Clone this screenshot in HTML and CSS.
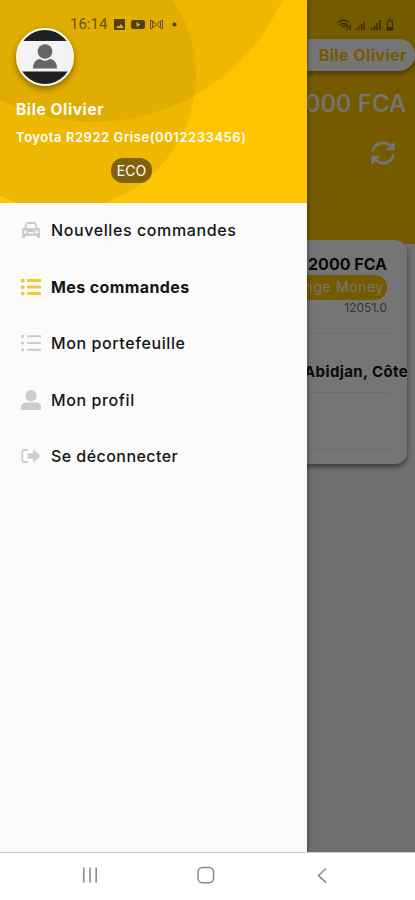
FILE: index.html
```html
<!DOCTYPE html>
<html lang="fr">
<head>
<meta charset="utf-8">
<meta name="viewport" content="width=device-width">
<title>Mes commandes</title>
<link rel="stylesheet" href="styles.css">
</head>
<body>
<div class="phone">
  <main class="screen">
    <section class="hero">
      <div class="user-pill"><span class="pill-name">Bile Olivier</span></div>
      <div class="balance">2000 FCA</div>
      <svg class="refresh" viewBox="0 0 26 26" fill="none" stroke="#fff" stroke-width="2.7"><path d="M2.5 11.5C3.5 6 8 2.800 13 2.800c4 0 6.500 2 8.500 5M23.500 14.500C22.500 20 18 23.200 13 23.200c-4 0-6.500-2-8.500-5"/><path d="M24.500 1.500v8.500h-8.500zM1.500 24.500V16H10z" fill="#fff" stroke-width=".5"/></svg>
    </section>
    <section class="order">
      <div class="price">2000 FCA</div>
      <div class="method">Orange Money</div>
      <div class="ref">12051.0</div>
      <div class="line l1"></div>
      <div class="address">Abidjan, Côte</div>
      <div class="line l2"></div>
      <div class="line l3"></div>
    </section>
  </main>
  <div class="scrim"></div>
  <aside class="drawer">
    <header class="profile">
      <svg class="rings" viewBox="0 0 307 203"><circle cx="93" cy="-86" r="208"/><circle cx="61" cy="75" r="135"/></svg>
      <div class="avatar"><svg viewBox="0 0 54 54"><path d="M0 0h54v11H0zM0 41.500h54V54H0z" fill="#202124"/><circle cx="27" cy="21.500" r="7.300" fill="#666"/><path d="M15 38.500c0-6 3-9 7-9.500q5 3.500 10 0c4 .5 7 3.500 7 9.500z" fill="#666"/></svg></div>
      <div class="name">Bile Olivier</div>
      <div class="vehicle">Toyota R2922 Grise(0012233456)</div>
      <span class="tier">ECO</span>
    </header>
    <nav class="menu">
      <a class="item i1"><svg viewBox="0 0 20 20"><path d="M3 8 5 3.200Q5.500 2 7 2h6q1.500 0 2 1.200L17 8h2v1.500h-.7c.5.700.7 1.500.7 2.500V18h-3v-2H4v2H1v-6c0-1 .2-1.800.7-2.500H1V8zm2.200 0h9.600L13.500 4h-7zM4.500 10.500a1.500 1.500 0 1 0 0 3 1.500 1.500 0 0 0 0-3zm11 0a1.500 1.500 0 1 0 0 3 1.500 1.500 0 0 0 0-3zM7.500 12v1.500h5V12z" fill-rule="evenodd"/></svg><span>Nouvelles commandes</span></a>
      <a class="item i2 active"><svg viewBox="0 0 20 20"><path d="M0 2h3.500v3.200H0zM6 2h14v3H6zM0 8.500h3.500v3.200H0zM6 8.500h14v3H6zM0 15h3.500v3.200H0zM6 15h14v3H6z"/></svg><span>Mes commandes</span></a>
      <a class="item i3"><svg viewBox="0 0 20 20"><path d="M0 2h3v2.500H0zM6 2.200h14v2H6zM0 8.700h3v2.500H0zM6 9h14v2H6zM0 15.500h3V18H0zM6 15.800h14v2H6z"/></svg><span>Mon portefeuille</span></a>
      <a class="item i4"><svg viewBox="0 0 20 20"><circle cx="10" cy="5.700" r="5.700"/><path d="M0 20v-2.500C0 14.500 2 12.500 5 12.500h10c3 0 5 2 5 5V20z"/></svg><span>Mon profil</span></a>
      <a class="item i5"><svg viewBox="0 0 20 20"><path d="M7 4H3.500Q1.200 4 1.200 6.300v7.400Q1.200 16 3.500 16H7" fill="none" stroke="#ccc" stroke-width="2"/><path d="M6.500 7.500H12V3l7.500 7L12 17v-4.500H6.500z"/></svg><span>Se déconnecter</span></a>
    </nav>
  </aside>
  <div class="status">
    <span class="clock">16:14</span>
    <svg class="notes" viewBox="0 0 66 14" fill="#51400a"><path fill-rule="evenodd" d="M2 1h9q1 0 1 1v9q0 1-1 1H2q-1 0-1-1V2q0-1 1-1zm1 9h8L8 6 6 8.500 5 7.500z"/><path fill-rule="evenodd" d="M20 2h10q2 0 2 2v5q0 2-2 2H20q-2 0-2-2V4q0-2 2-2zm3.500 2v5l4-2.500z"/><g fill="none" stroke="#6b5305"><path d="M37.500 2v9M49.500 2v9M39.500 3l4 3.500-4 3.500zM47.500 3l-4 3.500 4 3.500zM37.500 2l3 2M49.500 2l-3 2M37.500 11l3-2M49.500 11l-3-2"/></g><circle cx="61.500" cy="6.500" r="2"/></svg>
    <svg class="signal" viewBox="0 0 58 14" fill="none" stroke="#392b00"><path d="M1 4.500q5.500-5 11 0M3 7q3.500-3 7 0M5 9q2-1.500 4 0" stroke-width="1.500"/><path d="M10.500 12V7M13 7v5M19.500 12v-2M22 12V8M24.500 12V6M27 12V4" stroke-width="1.300"/><path d="M34.500 12v-2M37.500 12V8M40 12V5M43 12V2" stroke-width="1.600"/><path d="M50.500 3h5v9h-5zM51.500 2h3"/><path d="M50 9.500h6V12h-6z" fill="#392b00"/></svg>
  </div>
  <footer class="navbar">
    <svg viewBox="0 0 415 46" fill="none" stroke="#8c8c8c" stroke-width="1.600"><path d="M83.800 14.500v15M90 14.500v15M96.200 14.500v15"/><rect x="198" y="14.500" width="15.600" height="15.200" rx="4.500"/><path d="m326 15.500-7.500 7 7.500 7.200"/></svg>
  </footer>
</div>
</body>
</html>
```
FILE: styles.css
```css
* { box-sizing: border-box; }
body { margin: 0; font-family: Inter, "Noto Sans", sans-serif; color: #151515; }
.phone { position: relative; width: 415px; height: 900px; overflow: hidden; background: #fff; display: flex; flex-direction: column; }
.phone svg { display: block; }
.screen { height: 853px; background: #f4f4f4; display: flex; flex-direction: column; align-items: flex-end; white-space: nowrap; }
.hero { width: 100%; height: 244px; flex: none; background: #fec400; padding-top: 39px; display: flex; flex-direction: column; align-items: flex-end; }
.user-pill { width: 190px; height: 32px; border-radius: 16px; background: #fff; box-shadow: 0 3px 5px #0005; padding-right: 8px; text-align: right; font-size: 16px; line-height: 32px; font-weight: 700; letter-spacing: .4px; color: #fec400; }
.balance { margin: 18px 9px 0 0; font-size: 24px; line-height: 30px; font-weight: 500; color: #fff; }
.refresh { width: 26px; height: 26px; margin: 21px 19px 0 0; }
.order { width: 350px; height: 224px; margin: -4px 8px 0 0; border-radius: 12px; background: #fff; box-shadow: 0 3px 5px #0007; display: flex; flex-direction: column; align-items: flex-end; padding: 13px 0 0; }
.price { margin-right: 20px; font-size: 16px; line-height: 22px; font-weight: 700; }
.method { margin-right: 20px; height: 25px; padding: 0 3px 0 10px; border-radius: 12px; background: #fec400; color: #fff; font-size: 14px; line-height: 24px; letter-spacing: .6px; }
.ref { margin-right: 20px; font-size: 12px; line-height: 15px; color: #777; }
.address { width: 103px; overflow: hidden; margin-top: 27px; font-size: 15px; line-height: 22px; font-weight: 700; letter-spacing: .4px; }
.line { width: 320px; height: 1px; margin-right: 17px; background: #ececec; }
.l1 { margin-top: 18px; }
.l2 { margin-top: 9px; }
.l3 { margin-top: 56px; }
.scrim { position: absolute; top: 0; left: 0; width: 415px; height: 852px; background: rgba(0,0,0,.54); }
.drawer { position: absolute; top: 0; left: 0; width: 307px; height: 852px; background: #fbfbfb; box-shadow: 0 0 5px #0008; white-space: nowrap; }
.profile { position: relative; height: 203px; background: #fec400; color: #fff; padding: 28px 17px 0 16px; overflow: hidden; }
.rings { position: absolute; top: 0; left: 0; width: 307px; height: 203px; fill: rgba(0,0,0,.058); }
.avatar { position: relative; width: 58px; height: 58px; border: 2px solid #fffbea; border-radius: 50%; background: #f3f3f3; overflow: hidden; box-shadow: 0 3px 6px #0006; }
.name { position: relative; margin-top: 14px; font-size: 15.5px; line-height: 20px; font-weight: 700; letter-spacing: .6px; }
.vehicle { position: relative; margin-top: 8px; font-size: 13px; line-height: 19px; font-weight: 600; letter-spacing: .56px; }
.tier { position: relative; display: block; width: 41px; height: 25px; margin: 11px 0 0 95px; border-radius: 12px; background: #80620c; text-align: center; font-size: 14px; line-height: 25px; }
.menu { display: flex; flex-direction: column; margin-top: -1px; }
.item { height: 56.5px; padding: 0 21px; display: flex; align-items: center; gap: 10px; font-size: 16px; font-weight: 500; letter-spacing: .6px; fill: #ccc; }
.item svg { width: 20px; height: 20px; flex: none; }
.active { font-weight: 700; letter-spacing: .4px; fill: #f1c83a; }
.i5 { letter-spacing: .45px; }
.status { position: absolute; top: 17px; left: 70px; width: 325px; height: 15px; display: flex; align-items: center; }
.clock { width: 43px; font-family: Roboto, sans-serif; font-size: 15px; line-height: 15px; color: #6b5305; }
.notes { width: 66px; height: 14px; }
.signal { width: 58px; height: 14px; margin-left: auto; }
.navbar { position: absolute; top: 852px; left: 0; width: 415px; height: 48px; border-top: 1px solid #c8c8c8; background: #fff; }
.navbar svg { width: 415px; height: 46px; }
```
